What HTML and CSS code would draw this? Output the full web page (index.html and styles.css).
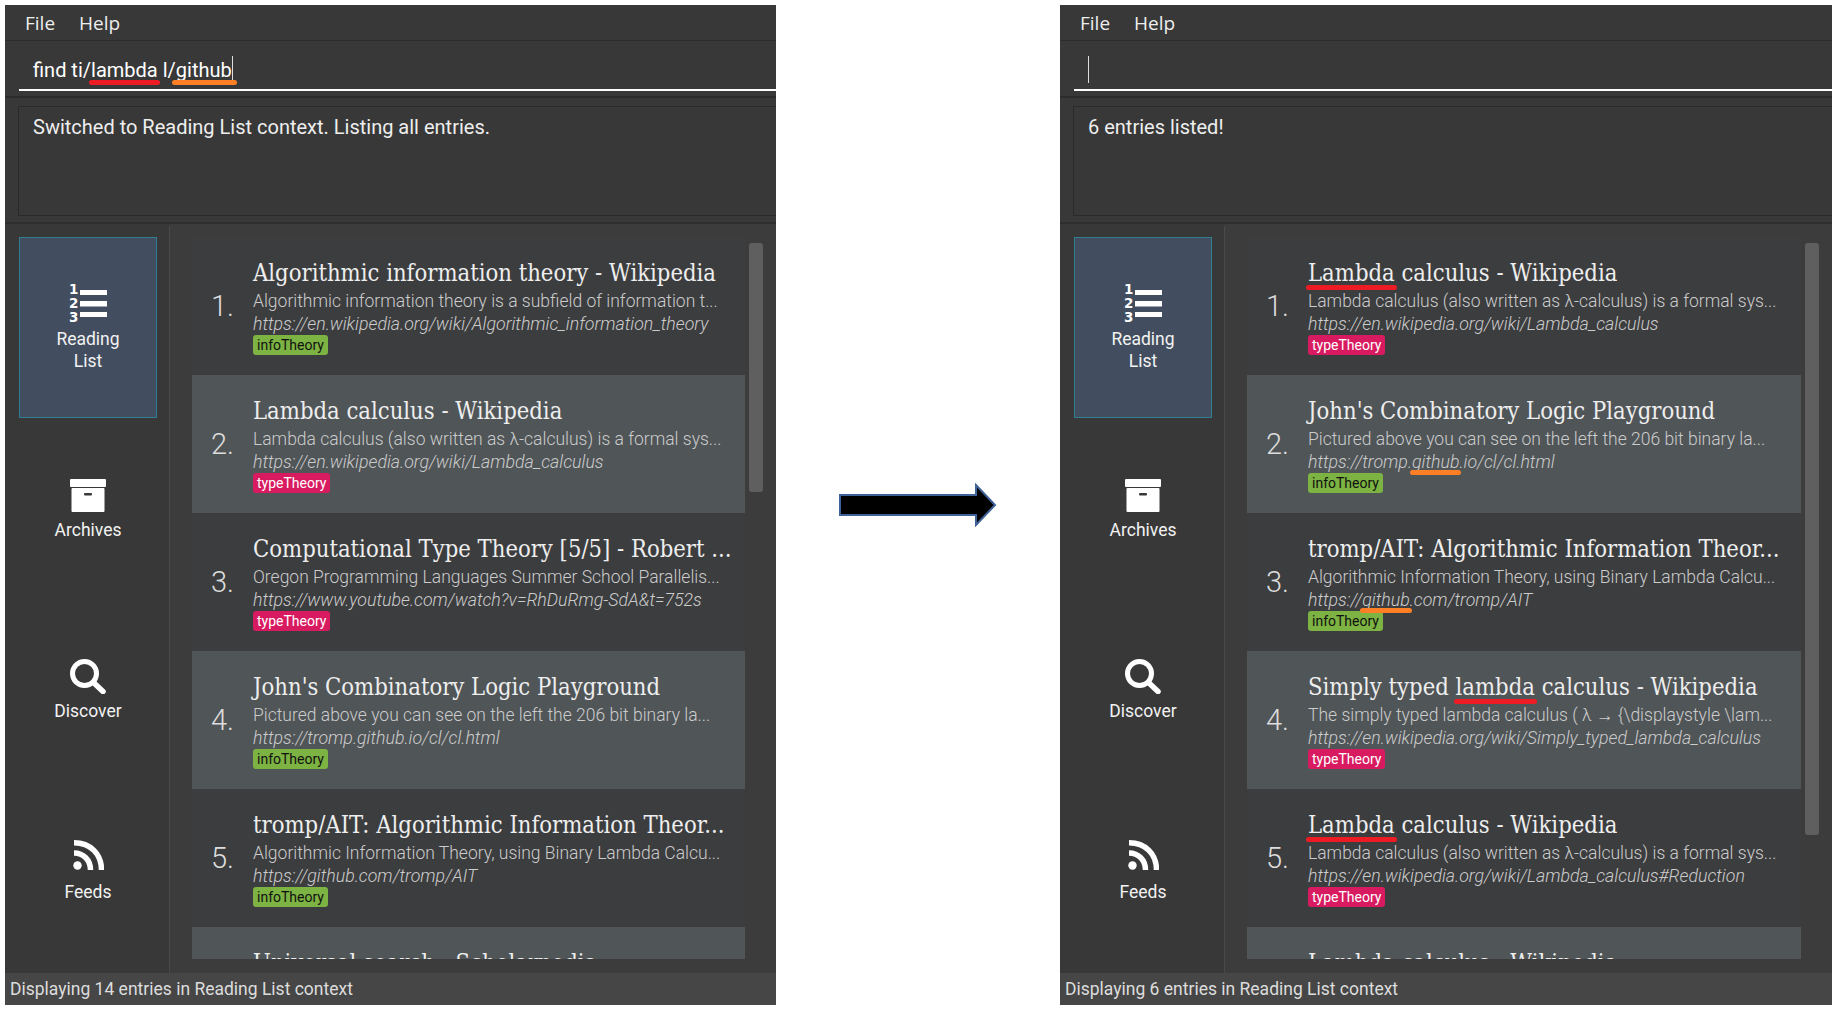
FILE: index.html
```html
<!DOCTYPE html>
<html lang="en">

<head>
    <meta charset="UTF-8">
    <meta name="viewport" content="width=device-width, initial-scale=1.0">
    <title>Find command - before and after</title>
    <link rel="stylesheet" href="styles.css">
</head>

<body>

    <!-- Before -->
    <div class="window">
        <div class="menu"><span>File</span><span>Help</span></div>
        <div class="command">
            <div class="command-input">find ti/<span class="mark mark-red">lambda</span> l/<span class="mark mark-orange mark-wide">github</span><span class="caret"></span></div>
        </div>
        <div class="result">
            <div class="result-box">Switched to Reading List context. Listing all entries.</div>
        </div>
        <div class="main">
            <div class="tabs">
                <div class="tab tab-active">
                    <svg class="icon icon-list" width="38" height="39" viewBox="0 0 38 39"><use href="#i-list"></use></svg>
                    <span>Reading<br>List</span>
                </div>
                <div class="tab">
                    <svg class="icon icon-box" width="36" height="33" viewBox="0 0 36 33"><use href="#i-box"></use></svg>
                    <span>Archives</span>
                </div>
                <div class="tab">
                    <svg class="icon icon-search" width="36" height="35" viewBox="0 0 36 35"><use href="#i-search"></use></svg>
                    <span>Discover</span>
                </div>
                <div class="tab">
                    <svg class="icon icon-feed" width="31" height="30" viewBox="0 0 31 30"><use href="#i-feed"></use></svg>
                    <span>Feeds</span>
                </div>
            </div>
            <div class="list-panel">
                <div class="list">
                    <div class="row">
                        <div class="num">1.</div>
                        <div class="entry">
                            <div class="entry-title">Algorithmic information theory - Wikipedia</div>
                            <div class="entry-desc">Algorithmic information theory is a subfield of information t...</div>
                            <div class="entry-url">https://en.wikipedia.org/wiki/Algorithmic_information_theory</div>
                            <span class="tag tag-info">infoTheory</span>
                        </div>
                    </div>
                    <div class="row">
                        <div class="num">2.</div>
                        <div class="entry">
                            <div class="entry-title">Lambda calculus - Wikipedia</div>
                            <div class="entry-desc">Lambda calculus (also written as λ-calculus) is a formal sys...</div>
                            <div class="entry-url">https://en.wikipedia.org/wiki/Lambda_calculus</div>
                            <span class="tag tag-type">typeTheory</span>
                        </div>
                    </div>
                    <div class="row">
                        <div class="num">3.</div>
                        <div class="entry">
                            <div class="entry-title">Computational Type Theory [5/5] - Robert ...</div>
                            <div class="entry-desc">Oregon Programming Languages Summer School Parallelis...</div>
                            <div class="entry-url">https://www.youtube.com/watch?v=RhDuRmg-SdA&amp;t=752s</div>
                            <span class="tag tag-type">typeTheory</span>
                        </div>
                    </div>
                    <div class="row">
                        <div class="num">4.</div>
                        <div class="entry">
                            <div class="entry-title">John's Combinatory Logic Playground</div>
                            <div class="entry-desc">Pictured above you can see on the left the 206 bit binary la...</div>
                            <div class="entry-url">https://tromp.github.io/cl/cl.html</div>
                            <span class="tag tag-info">infoTheory</span>
                        </div>
                    </div>
                    <div class="row">
                        <div class="num">5.</div>
                        <div class="entry">
                            <div class="entry-title">tromp/AIT: Algorithmic Information Theor...</div>
                            <div class="entry-desc">Algorithmic Information Theory, using Binary Lambda Calcu...</div>
                            <div class="entry-url">https://github.com/tromp/AIT</div>
                            <span class="tag tag-info">infoTheory</span>
                        </div>
                    </div>
                    <div class="row">
                        <div class="num"></div>
                        <div class="entry">
                            <div class="entry-title">Universal search - Scholarpedia</div>
                        </div>
                    </div>
                </div>
                <div class="scrollbar"><div class="thumb thumb-short"></div></div>
            </div>
        </div>
        <div class="status">Displaying 14 entries in Reading List context</div>
    </div>

    <div class="arrow-gap">
        <svg width="158" height="44" viewBox="0 0 158 44">
            <path d="M1 12H137V2L156 22L137 42V32H1Z" fill="#000" stroke="#3f6299" stroke-width="2"></path>
        </svg>
    </div>

    <!-- After -->
    <div class="window">
        <div class="menu"><span>File</span><span>Help</span></div>
        <div class="command">
            <div class="command-input"><span class="caret"></span></div>
        </div>
        <div class="result">
            <div class="result-box">6 entries listed!</div>
        </div>
        <div class="main">
            <div class="tabs">
                <div class="tab tab-active">
                    <svg class="icon icon-list" width="38" height="39" viewBox="0 0 38 39"><use href="#i-list"></use></svg>
                    <span>Reading<br>List</span>
                </div>
                <div class="tab">
                    <svg class="icon icon-box" width="36" height="33" viewBox="0 0 36 33"><use href="#i-box"></use></svg>
                    <span>Archives</span>
                </div>
                <div class="tab">
                    <svg class="icon icon-search" width="36" height="35" viewBox="0 0 36 35"><use href="#i-search"></use></svg>
                    <span>Discover</span>
                </div>
                <div class="tab">
                    <svg class="icon icon-feed" width="31" height="30" viewBox="0 0 31 30"><use href="#i-feed"></use></svg>
                    <span>Feeds</span>
                </div>
            </div>
            <div class="list-panel">
                <div class="list">
                    <div class="row">
                        <div class="num">1.</div>
                        <div class="entry">
                            <div class="entry-title"><span class="mark mark-red">Lambda</span> calculus - Wikipedia</div>
                            <div class="entry-desc">Lambda calculus (also written as λ-calculus) is a formal sys...</div>
                            <div class="entry-url">https://en.wikipedia.org/wiki/Lambda_calculus</div>
                            <span class="tag tag-type">typeTheory</span>
                        </div>
                    </div>
                    <div class="row">
                        <div class="num">2.</div>
                        <div class="entry">
                            <div class="entry-title">John's Combinatory Logic Playground</div>
                            <div class="entry-desc">Pictured above you can see on the left the 206 bit binary la...</div>
                            <div class="entry-url">https://tromp.<span class="mark mark-orange">github</span>.io/cl/cl.html</div>
                            <span class="tag tag-info">infoTheory</span>
                        </div>
                    </div>
                    <div class="row">
                        <div class="num">3.</div>
                        <div class="entry">
                            <div class="entry-title">tromp/AIT: Algorithmic Information Theor...</div>
                            <div class="entry-desc">Algorithmic Information Theory, using Binary Lambda Calcu...</div>
                            <div class="entry-url">https://<span class="mark mark-orange">github</span>.com/tromp/AIT</div>
                            <span class="tag tag-info">infoTheory</span>
                        </div>
                    </div>
                    <div class="row">
                        <div class="num">4.</div>
                        <div class="entry">
                            <div class="entry-title">Simply typed <span class="mark mark-red">lambda</span> calculus - Wikipedia</div>
                            <div class="entry-desc">The simply typed lambda calculus ( λ → {\displaystyle \lam...</div>
                            <div class="entry-url">https://en.wikipedia.org/wiki/Simply_typed_lambda_calculus</div>
                            <span class="tag tag-type">typeTheory</span>
                        </div>
                    </div>
                    <div class="row">
                        <div class="num">5.</div>
                        <div class="entry">
                            <div class="entry-title"><span class="mark mark-red">Lambda</span> calculus - Wikipedia</div>
                            <div class="entry-desc">Lambda calculus (also written as λ-calculus) is a formal sys...</div>
                            <div class="entry-url">https://en.wikipedia.org/wiki/Lambda_calculus#Reduction</div>
                            <span class="tag tag-type">typeTheory</span>
                        </div>
                    </div>
                    <div class="row">
                        <div class="num"></div>
                        <div class="entry">
                            <div class="entry-title">Lambda calculus - Wikipedia</div>
                        </div>
                    </div>
                </div>
                <div class="scrollbar"><div class="thumb thumb-long"></div></div>
            </div>
        </div>
        <div class="status">Displaying 6 entries in Reading List context</div>
    </div>

    <!-- Shared icons -->
    <svg class="icon-defs" width="0" height="0">
        <defs>
            <g id="i-list" fill="#fff">
                <text x="0" y="10" class="icon-digit">1</text>
                <text x="0" y="24" class="icon-digit">2</text>
                <text x="0" y="38" class="icon-digit">3</text>
                <rect x="11" y="6" width="27" height="5"></rect>
                <rect x="11" y="17" width="27" height="5.5"></rect>
                <rect x="11" y="28" width="27" height="5"></rect>
            </g>
            <g id="i-box">
                <rect x="0" y="0" width="36" height="8" rx="1" fill="#fff"></rect>
                <rect x="1.5" y="9" width="33" height="24" rx="1" fill="#fff"></rect>
                <rect x="14" y="14" width="8" height="2.5" rx="1" fill="#383838"></rect>
            </g>
            <g id="i-search" fill="none" stroke="#fff">
                <circle cx="14.5" cy="14.5" r="12" stroke-width="5"></circle>
                <path d="M24 24L33 32.5" stroke-width="5.5" stroke-linecap="round"></path>
            </g>
            <g id="i-feed" fill="none" stroke="#fff" stroke-width="5.5">
                <circle cx="4.5" cy="25.5" r="4.2" fill="#fff" stroke="none"></circle>
                <path d="M1 13C10.5 13 17.5 20 17.5 30"></path>
                <path d="M1 2.8C17.5 2.8 28.5 14 28.5 30"></path>
            </g>
        </defs>
    </svg>

</body>

</html>
```

FILE: styles.css
```css
* {
    box-sizing: border-box;
}

body {
    margin: 0;
    padding: 5px;
    height: 1010px;
    display: flex;
    overflow: hidden;
    background: #fff;
    color: #fff;
    font-family: Roboto, sans-serif;
}

.window {
    width: 771px;
    flex: none;
    display: flex;
    flex-direction: column;
    background: #383838;
}

.window:last-of-type {
    width: 772px;
}

.arrow-gap {
    flex: 1;
    display: flex;
    align-items: center;
    justify-content: center;
}

.menu {
    height: 36px;
    padding-left: 20px;
    display: flex;
    align-items: center;
    gap: 24px;
    border-bottom: 1px solid #2c2c2c;
    font-family: "Open Sans", sans-serif;
    font-size: 19px;
    color: #eee;
}

.command {
    height: 57px;
    padding: 0 0 5px 14px;
    border-bottom: 2px solid #2c2c2c;
}

.command-input {
    height: 50px;
    padding: 10px 0 1px 14px;
    display: flex;
    align-items: center;
    border-bottom: 2px solid #fff;
    font-size: 20px;
    white-space: pre;
}

.caret {
    width: 1px;
    height: 27px;
    background: #ddd;
}

.result {
    height: 126px;
    padding: 8px 0 6px 13px;
    border-bottom: 2px solid #2e2e2e;
}

.result-box {
    height: 110px;
    padding: 5px 14px;
    border: 1px solid #2a2a2a;
    border-right: none;
    font-size: 20px;
    line-height: 30px;
    color: #eee;
}

.main {
    flex: 1;
    min-height: 0;
    display: flex;
}

.tabs {
    width: 165px;
    flex: none;
    padding-top: 11px;
    margin-top: 2px;
    border-right: 1px solid #4a4a4a;
}

.tab {
    width: 138px;
    height: 181px;
    margin-left: 14px;
    padding-top: 2px;
    display: flex;
    flex-direction: column;
    align-items: center;
    justify-content: center;
    font-size: 17.5px;
    line-height: 22px;
    text-align: center;
    color: #f2f2f2;
}

.tab-active {
    padding-top: 0;
    background: #424e60;
    border: 1px solid #2f7f93;
}

.icon {
    display: block;
    flex: none;
}

.icon-list {
    margin-bottom: 5px;
}

.icon-box {
    margin-bottom: 7px;
}

.icon-search {
    margin-bottom: 6px;
}

.icon-feed {
    margin-bottom: 11px;
}

.icon-defs {
    position: absolute;
}

.icon-digit {
    font-family: "DejaVu Sans", sans-serif;
    font-size: 13.5px;
    font-weight: bold;
}

.list-panel {
    flex: 1;
    min-width: 0;
    padding: 13px 13px 14px 22px;
    display: flex;
    background: #3c3c3c;
}

.list {
    flex: 1;
    min-width: 0;
    overflow: hidden;
}

.row {
    height: 138px;
    display: flex;
    background: #3c3d3f;
}

.row:nth-child(even) {
    background: #505558;
}

.num {
    width: 61px;
    flex: none;
    align-self: center;
    padding-right: 19px;
    text-align: right;
    font-size: 29px;
    font-weight: 300;
    color: #ddd;
}

.entry {
    flex: 1;
    min-width: 0;
    padding-top: 20px;
    white-space: nowrap;
}

.entry-title {
    margin-bottom: 1px;
    font-family: "DejaVu Serif", serif;
    font-stretch: condensed;
    font-size: 23.6px;
    line-height: 32px;
    color: #eee;
}

.entry-desc {
    font-size: 17.5px;
    font-weight: 300;
    line-height: 23px;
    color: #ccc;
}

.entry-url {
    margin-bottom: -1px;
    font-size: 17.75px;
    font-weight: 300;
    font-style: italic;
    line-height: 23px;
    color: #ccc;
}

.tag {
    display: inline-block;
    height: 20px;
    padding: 0 4px;
    border-radius: 3px;
    font-size: 14px;
    line-height: 20px;
    vertical-align: top;
}

.tag-info {
    background: #7cb342;
    color: #111;
}

.tag-type {
    background: #d81b60;
    color: #fff;
}

.scrollbar {
    width: 14px;
    margin-left: 4px;
}

.thumb {
    margin-top: 6px;
    border-radius: 3px;
    background: #5f5f5f;
}

.thumb-short {
    height: 249px;
}

.thumb-long {
    height: 592px;
}

.status {
    height: 32px;
    padding-left: 5px;
    display: flex;
    align-items: center;
    background: #464646;
    font-size: 17.5px;
    color: #ddd;
}

/* hand drawn underlines from the original figure */
.mark {
    position: relative;
}

.mark::after {
    content: "";
    position: absolute;
    left: -2px;
    right: -2px;
    bottom: -3px;
    height: 5px;
    border-radius: 3px;
}

.mark-wide::after {
    left: -4px;
    right: -5px;
}

.mark-red::after {
    background: #ed1c24;
}

.mark-orange::after {
    background: #ff7f27;
}
```
